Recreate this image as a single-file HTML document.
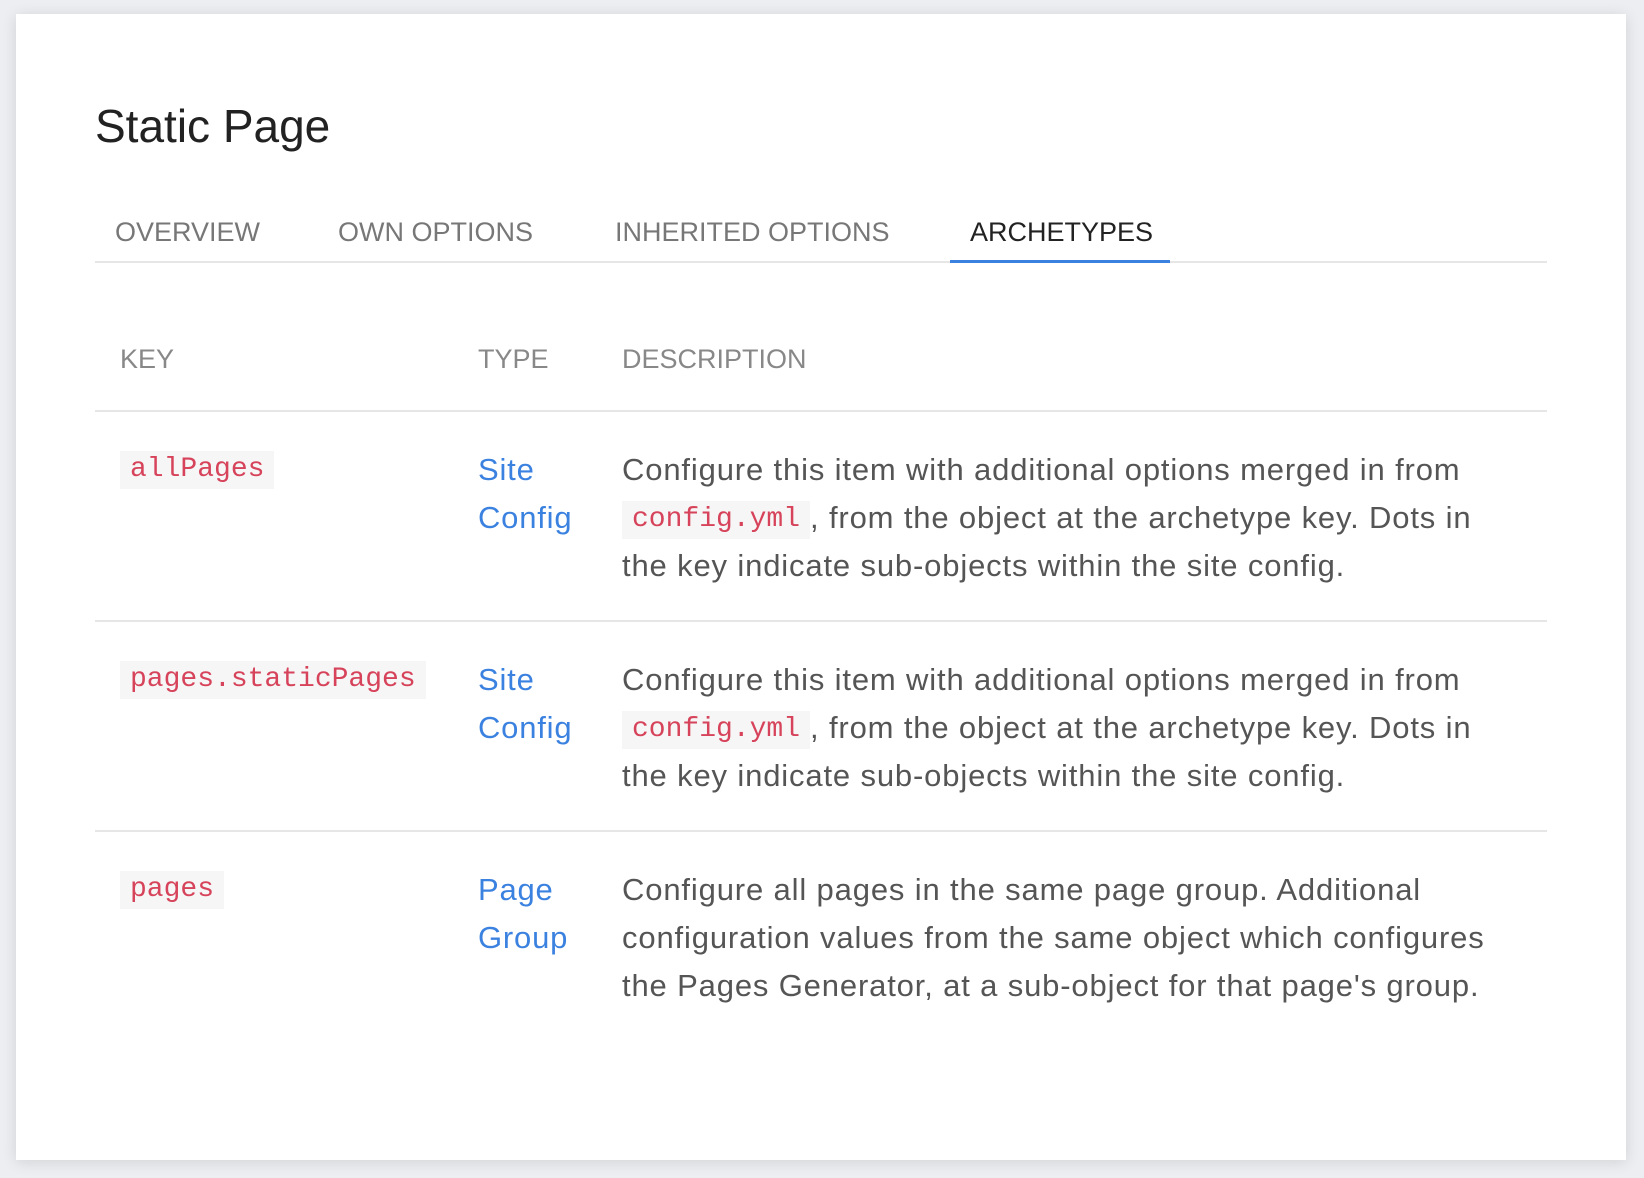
<!DOCTYPE html>
<html><head><meta charset="utf-8"><style>
body{margin:0;width:1644px;height:1178px;background:#eceef2;font-family:"Liberation Sans",sans-serif;overflow:hidden;position:relative}
.card{position:absolute;left:16px;top:14px;width:1610px;height:1146px;background:#fff;box-shadow:0 2px 14px rgba(0,0,0,.12)}
.a{position:absolute;white-space:nowrap}
h1{position:absolute;left:95px;top:96px;margin:0;font-weight:normal;font-size:46px;color:#222;line-height:60px}
.tab{position:absolute;top:216px;font-size:27px;color:#777;line-height:32px}
.hdr{position:absolute;top:342px;font-size:27px;color:#888;line-height:34px}
.line{position:absolute;left:95px;width:1452px;height:2px;background:#e6e6e6}
.code{font-family:"Liberation Mono",monospace;color:#d6435a;background:#f6f6f6;font-size:28px;padding:0 10px;letter-spacing:0;display:inline-block;line-height:38px;vertical-align:middle}
.desc{position:absolute;left:622px;font-size:31px;letter-spacing:0.85px;color:#555;line-height:48px;white-space:nowrap}
.type{position:absolute;left:478px;font-size:31px;letter-spacing:0.8px;color:#3b82e0;line-height:48px}
.key{position:absolute;left:120px;line-height:42px}
</style></head><body>
<div class="card"></div>
<h1 style="left:95px">Static Page</h1>
<div class="tab" style="left:115px">OVERVIEW</div>
<div class="tab" style="left:338px">OWN OPTIONS</div>
<div class="tab" style="left:615px">INHERITED OPTIONS</div>
<div class="tab" style="left:970px;color:#222">ARCHETYPES</div>
<div class="line" style="top:261px;height:2px"></div>
<div class="a" style="left:950px;top:260px;width:220px;height:3px;background:#3b82e0"></div>
<div class="hdr" style="left:120px">KEY</div>
<div class="hdr" style="left:478px">TYPE</div>
<div class="hdr" style="left:622px">DESCRIPTION</div>
<div class="line" style="top:410px"></div>

<div class="key a" style="top:449px"><span class="code">allPages</span></div>
<div class="type" style="top:446px">Site<br>Config</div>
<div class="desc" style="top:446px">Configure this item with additional options merged in from<br><span class="code">config.yml</span>, from the object at the archetype key. Dots in<br>the key indicate sub-objects within the site config.</div>
<div class="line" style="top:620px"></div>

<div class="key a" style="top:659px"><span class="code">pages.staticPages</span></div>
<div class="type" style="top:656px">Site<br>Config</div>
<div class="desc" style="top:656px">Configure this item with additional options merged in from<br><span class="code">config.yml</span>, from the object at the archetype key. Dots in<br>the key indicate sub-objects within the site config.</div>
<div class="line" style="top:830px"></div>

<div class="key a" style="top:869px"><span class="code">pages</span></div>
<div class="type" style="top:866px">Page<br>Group</div>
<div class="desc" style="top:866px">Configure all pages in the same page group. Additional<br>configuration values from the same object which configures<br>the Pages Generator, at a sub-object for that page's group.</div>
</body></html>
